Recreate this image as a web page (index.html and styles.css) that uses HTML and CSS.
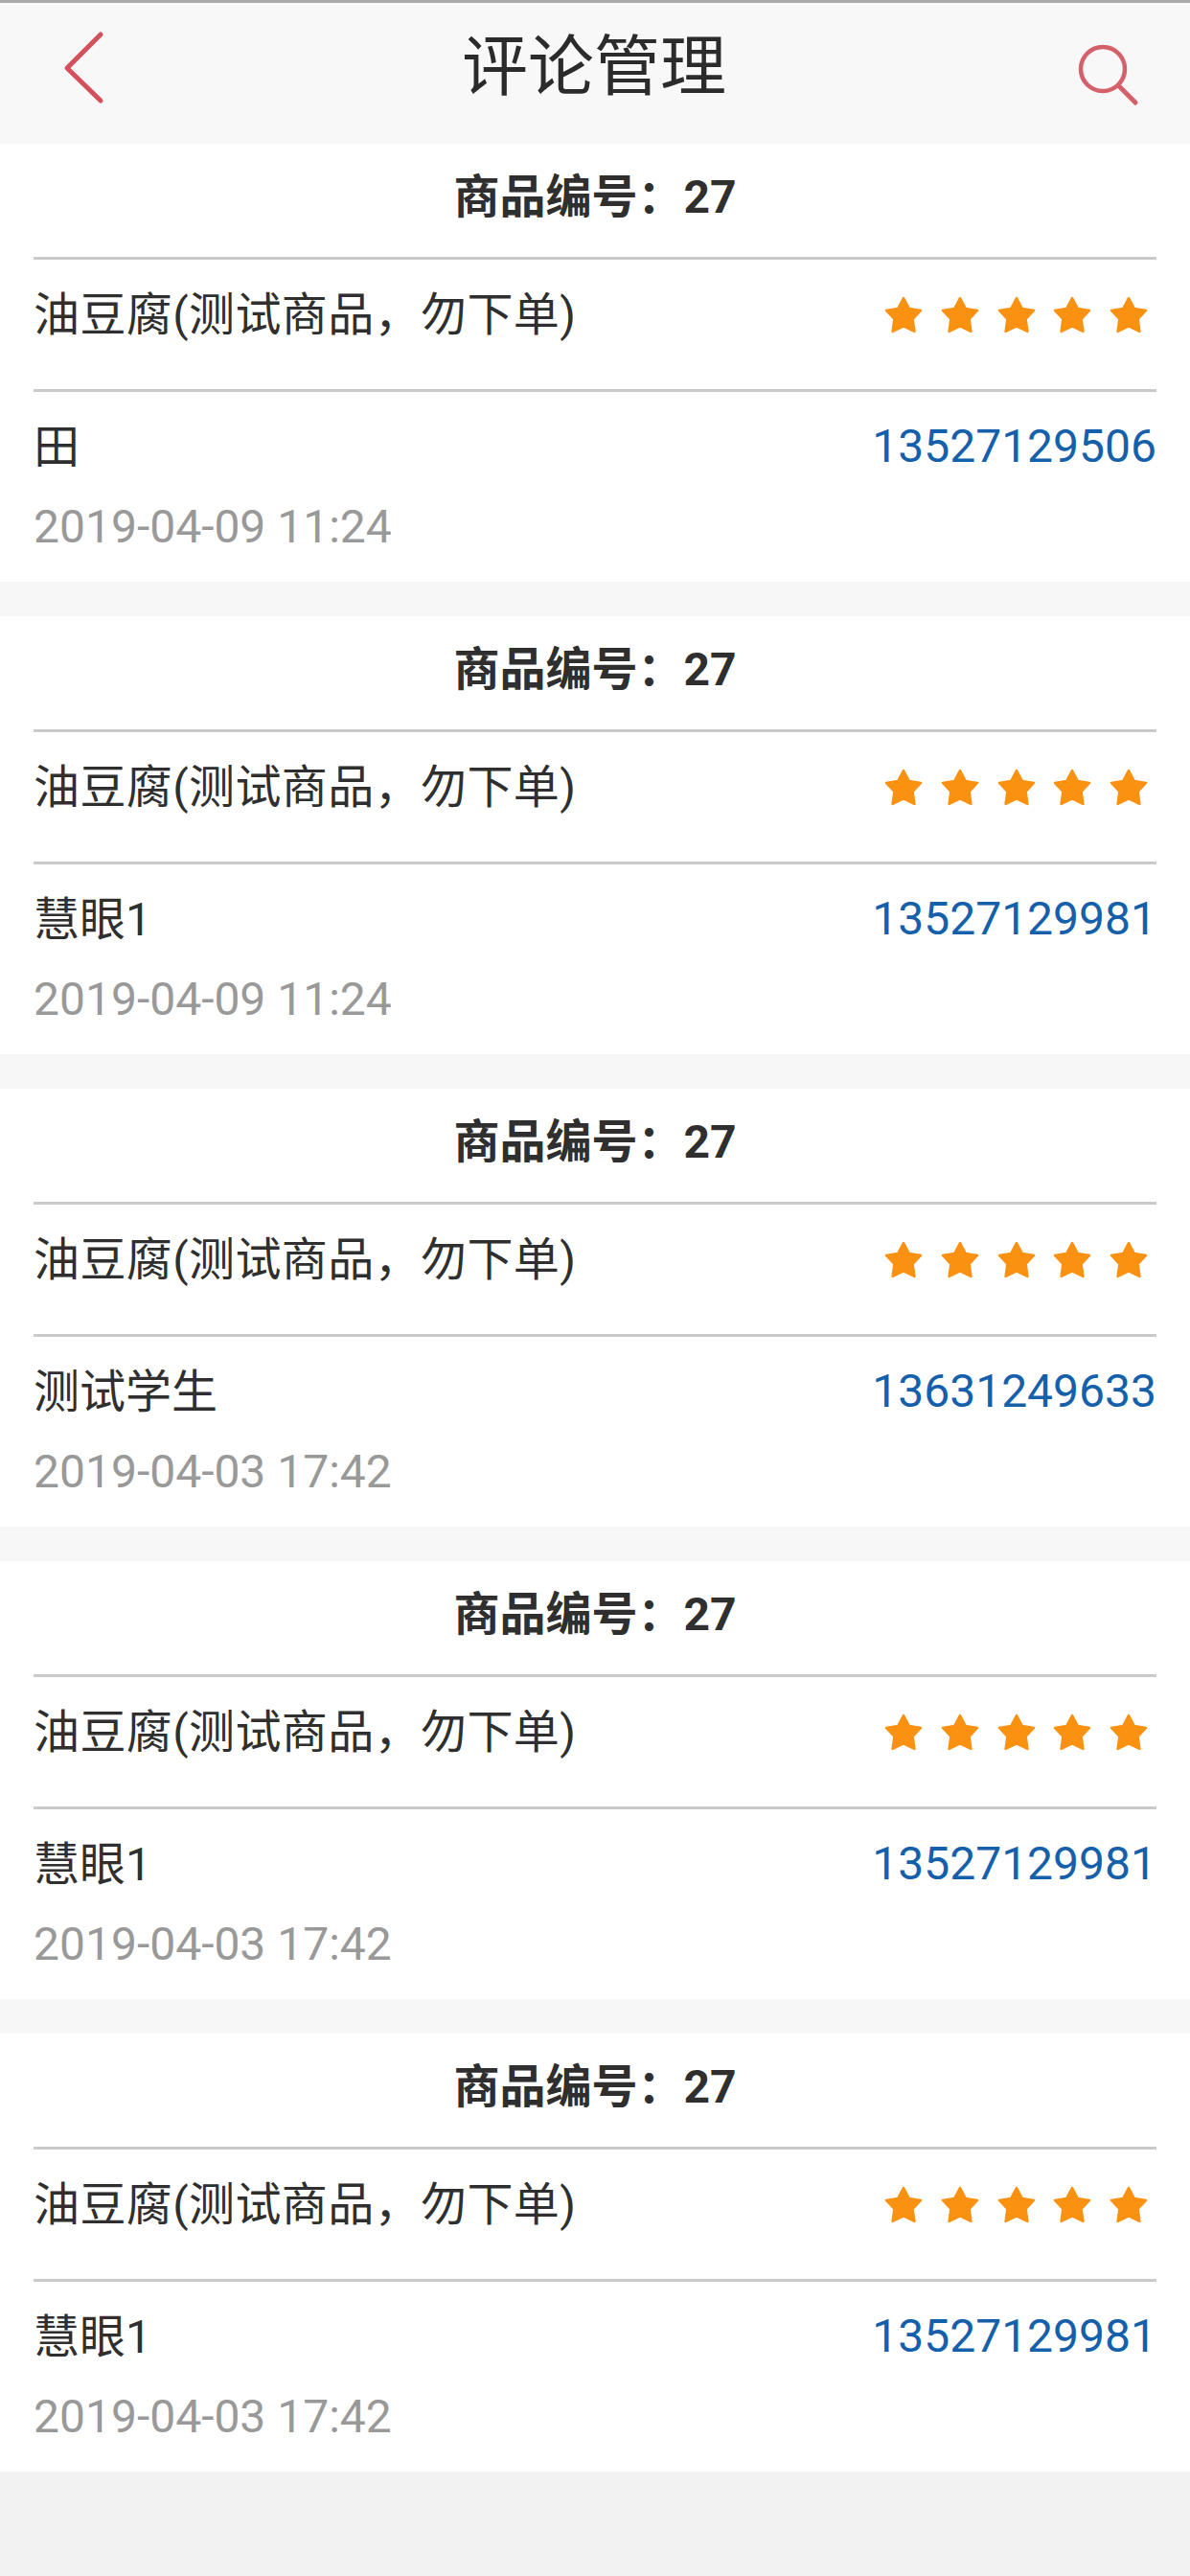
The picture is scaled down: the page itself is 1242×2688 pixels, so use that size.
FILE: index.html
```html
<!DOCTYPE html>
<html lang="zh-CN">
  <head>
    <meta charset="UTF-8" />
    <meta name="viewport" content="width=device-width,initial-scale=1.0" />
    <title>评论管理</title>
    <link rel="stylesheet" href="styles.css">
  </head>
  <body>
    <svg class="defs" width="0" height="0">
      <symbol id="star" viewBox="0 0 40 40">
        <path d="M20 2 L25.8 13 L38 15 L29.6 24 L31.4 37 L20 31.4 L8.6 37 L10.4 24 L2 15 L14.2 13 Z" fill="#fb9110" stroke="#fb9110" stroke-width="2.5" stroke-linejoin="round" />
      </symbol>
    </svg>

    <header class="topbar">
      <svg class="icon-back" width="50" height="80" viewBox="0 0 50 80">
        <path d="M43 5 L8 40 L43 74" fill="none" stroke="#d4505c" stroke-width="5" stroke-linecap="round" stroke-linejoin="round" />
      </svg>
      <h1>评论管理</h1>
      <svg class="icon-search" width="70" height="70" viewBox="0 0 70 70">
        <circle cx="29" cy="29" r="23" fill="none" stroke="#d4606a" stroke-width="4.5" />
        <path d="M46 47 L63 64" fill="none" stroke="#d4606a" stroke-width="5" stroke-linecap="round" />
      </svg>
    </header>

    <main class="list">
      <section class="card">
        <h2>商品编号：27</h2>
        <div class="row product">
          <span class="product-name">油豆腐(测试商品，勿下单)</span>
          <span class="stars">
            <svg><use href="#star" /></svg><svg><use href="#star" /></svg><svg><use href="#star" /></svg><svg><use href="#star" /></svg><svg><use href="#star" /></svg>
          </span>
        </div>
        <div class="person">
          <div class="row">
            <span class="name">田</span>
            <span class="phone">13527129506</span>
          </div>
          <div class="date">2019-04-09 11:24</div>
        </div>
      </section>

      <section class="card">
        <h2>商品编号：27</h2>
        <div class="row product">
          <span class="product-name">油豆腐(测试商品，勿下单)</span>
          <span class="stars">
            <svg><use href="#star" /></svg><svg><use href="#star" /></svg><svg><use href="#star" /></svg><svg><use href="#star" /></svg><svg><use href="#star" /></svg>
          </span>
        </div>
        <div class="person">
          <div class="row">
            <span class="name">慧眼1</span>
            <span class="phone">13527129981</span>
          </div>
          <div class="date">2019-04-09 11:24</div>
        </div>
      </section>

      <section class="card">
        <h2>商品编号：27</h2>
        <div class="row product">
          <span class="product-name">油豆腐(测试商品，勿下单)</span>
          <span class="stars">
            <svg><use href="#star" /></svg><svg><use href="#star" /></svg><svg><use href="#star" /></svg><svg><use href="#star" /></svg><svg><use href="#star" /></svg>
          </span>
        </div>
        <div class="person">
          <div class="row">
            <span class="name">测试学生</span>
            <span class="phone">13631249633</span>
          </div>
          <div class="date">2019-04-03 17:42</div>
        </div>
      </section>

      <section class="card">
        <h2>商品编号：27</h2>
        <div class="row product">
          <span class="product-name">油豆腐(测试商品，勿下单)</span>
          <span class="stars">
            <svg><use href="#star" /></svg><svg><use href="#star" /></svg><svg><use href="#star" /></svg><svg><use href="#star" /></svg><svg><use href="#star" /></svg>
          </span>
        </div>
        <div class="person">
          <div class="row">
            <span class="name">慧眼1</span>
            <span class="phone">13527129981</span>
          </div>
          <div class="date">2019-04-03 17:42</div>
        </div>
      </section>

      <section class="card">
        <h2>商品编号：27</h2>
        <div class="row product">
          <span class="product-name">油豆腐(测试商品，勿下单)</span>
          <span class="stars">
            <svg><use href="#star" /></svg><svg><use href="#star" /></svg><svg><use href="#star" /></svg><svg><use href="#star" /></svg><svg><use href="#star" /></svg>
          </span>
        </div>
        <div class="person">
          <div class="row">
            <span class="name">慧眼1</span>
            <span class="phone">13527129981</span>
          </div>
          <div class="date">2019-04-03 17:42</div>
        </div>
      </section>
    </main>
  </body>
</html>
```

FILE: styles.css
```css
* {
  box-sizing: border-box;
}
html,
body {
  height: 100%;
}
body {
  margin: 0;
  background: #f2f2f2;
  color: #2f2f2f;
  font-family: Roboto, "Noto Sans CJK SC", sans-serif;
  font-size: 48px;
}
.defs {
  display: block;
  height: 0;
}
.topbar {
  height: 150px;
  padding: 0 50px 12px 62px;
  display: flex;
  align-items: center;
  justify-content: space-between;
  border-top: 3px solid #a9a9a9;
  background: #f8f8f8;
}
.topbar h1 {
  margin: 0 0 0 6px;
  font-size: 69px;
  font-weight: 400;
  line-height: 80px;
  color: #2b2b2b;
}
.icon-back {
  display: block;
}
.icon-search {
  display: block;
  margin-top: 14px;
}
.list {
  display: flex;
  flex-direction: column;
  gap: 36px;
  background: #f7f7f7;
}
.card {
  height: 457px;
  padding: 0 35px;
  background: #fff;
}
.card h2 {
  height: 118px;
  margin: 0;
  padding-top: 4px;
  font-size: 48px;
  font-weight: 700;
  line-height: 104px;
  text-align: center;
}
.row {
  display: flex;
  justify-content: space-between;
  align-items: center;
}
.product {
  height: 138px;
  padding-bottom: 30px;
  border-top: 3px solid #cacaca;
}
.product-name {
  letter-spacing: 0.4px;
}
.stars {
  display: flex;
  gap: 18.7px;
  margin: 10px 9px 0 0;
}
.stars svg {
  display: block;
  width: 40px;
  height: 40px;
}
.person {
  padding-top: 28px;
  border-top: 3px solid #cacaca;
}
.person .row {
  height: 56px;
}
.name {
  margin-bottom: 6px;
}
.phone {
  color: #1560ab;
}
.date {
  margin-top: 29px;
  line-height: 56px;
  color: #999;
}
```
